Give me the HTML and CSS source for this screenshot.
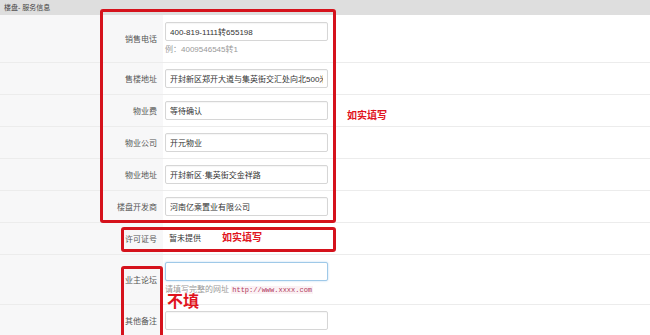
FILE: index.html
```html
<!DOCTYPE html>
<html lang="zh-CN">
<head>
    <meta charset="UTF-8">
    <title>楼盘- 服务信息</title>
    <link rel="stylesheet" href="styles.css">
</head>
<body>

    <div class="panel-title">楼盘- 服务信息</div>

    <div class="form">
        <div class="row row-hint">
            <div class="label">销售电话</div>
            <div class="field">
                <input class="text" type="text" value="400-819-1111转655198">
                <div class="hint">例：4009546545转1</div>
            </div>
        </div>
        <div class="row">
            <div class="label">售楼地址</div>
            <div class="field"><input class="text" type="text" value="开封新区郑开大道与集英街交汇处向北500米路"></div>
        </div>
        <div class="row">
            <div class="label">物业费</div>
            <div class="field"><input class="text" type="text" value="等待确认"></div>
        </div>
        <div class="row">
            <div class="label">物业公司</div>
            <div class="field"><input class="text" type="text" value="开元物业"></div>
        </div>
        <div class="row">
            <div class="label">物业地址</div>
            <div class="field"><input class="text" type="text" value="开封新区·集英街交金祥路"></div>
        </div>
        <div class="row">
            <div class="label">楼盘开发商</div>
            <div class="field"><input class="text" type="text" value="河南亿乘置业有限公司"></div>
        </div>
        <div class="row">
            <div class="label">许可证号</div>
            <div class="field"><span class="static">暂未提供</span></div>
        </div>
        <div class="row row-hint row-forum">
            <div class="label">业主论坛</div>
            <div class="field">
                <input class="text focus" type="text" value="">
                <div class="hint">请填写完整的网址 <code>http://www.xxxx.com</code></div>
            </div>
        </div>
        <div class="row">
            <div class="label">其他备注</div>
            <div class="field"><input class="text" type="text" value=""></div>
        </div>
    </div>

    <!-- 标注 -->
    <div class="mark mark-main"></div>
    <div class="mark mark-license"></div>
    <div class="mark mark-skip"></div>
    <div class="note note-main">如实填写</div>
    <div class="note note-license">如实填写</div>
    <div class="note note-skip">不填</div>

</body>
</html>
```

FILE: styles.css
```css
body {
    margin: 0;
    padding: 0;
    background: #ffffff;
    font-family: "Liberation Sans", "Noto Sans CJK SC", sans-serif;
    color: #444;
    overflow: hidden;
}

.panel-title {
    height: 15px;
    line-height: 15px;
    padding-left: 4px;
    background: #dedede;
    font-size: 7px;
    color: #444;
}

.form {
    display: flex;
    flex-direction: column;
}

.row {
    display: grid;
    grid-template-columns: 163px 1fr;
    border-bottom: 1px solid #ececec;
}

.label {
    display: flex;
    align-items: center;
    justify-content: flex-end;
    padding-right: 6px;
    background: #f7f7f8;
    font-size: 8px;
    color: #555;
}

.field {
    padding: 6px 0 6px 2px;
    display: flex;
    flex-direction: column;
    justify-content: center;
    min-height: 19px;
}

.row-hint .field {
    padding-top: 7px;
    padding-bottom: 6px;
    justify-content: flex-start;
}

.row-forum .field {
    padding-bottom: 8px;
}

.text {
    box-sizing: border-box;
    width: 163px;
    height: 19px;
    margin: 0;
    padding: 0 4px;
    border: 1px solid #d6d6d6;
    border-radius: 2px;
    background: #fff;
    font-family: "Liberation Sans", "Noto Sans CJK SC", sans-serif;
    font-size: 8px;
    color: #333;
    box-shadow: inset 0 1px 1px rgba(0, 0, 0, 0.04);
}

.text.focus {
    border-color: #9fc9e8;
    box-shadow: 0 0 2px rgba(102, 170, 230, 0.5);
}

.hint {
    margin-top: 3px;
    line-height: 12px;
    font-size: 8px;
    color: #999;
}

.hint code {
    font-family: "Liberation Mono", monospace;
    font-size: 7px;
    color: #b0365a;
    background: #fbf1f4;
    padding: 0 1px;
}

.static {
    padding-left: 4px;
    font-size: 8px;
    color: #333;
    line-height: 19px;
}

.mark {
    position: absolute;
    box-sizing: border-box;
    border: 3px solid #d5121c;
    border-radius: 3px;
}

.mark-main {
    left: 100px;
    top: 9px;
    width: 236px;
    height: 214px;
}

.mark-license {
    left: 121px;
    top: 227px;
    width: 215px;
    height: 25px;
}

.mark-skip {
    left: 121px;
    top: 266px;
    width: 42px;
    height: 80px;
}

.note {
    position: absolute;
    color: #e0131d;
    font-weight: bold;
    text-shadow: 0 0 2px #fff, 0 0 2px #fff;
    line-height: 1;
}

.note-main {
    left: 347px;
    top: 111px;
    font-size: 10px;
}

.note-license {
    left: 222px;
    top: 233px;
    font-size: 10px;
}

.note-skip {
    left: 167px;
    top: 294px;
    font-size: 16px;
}
```
